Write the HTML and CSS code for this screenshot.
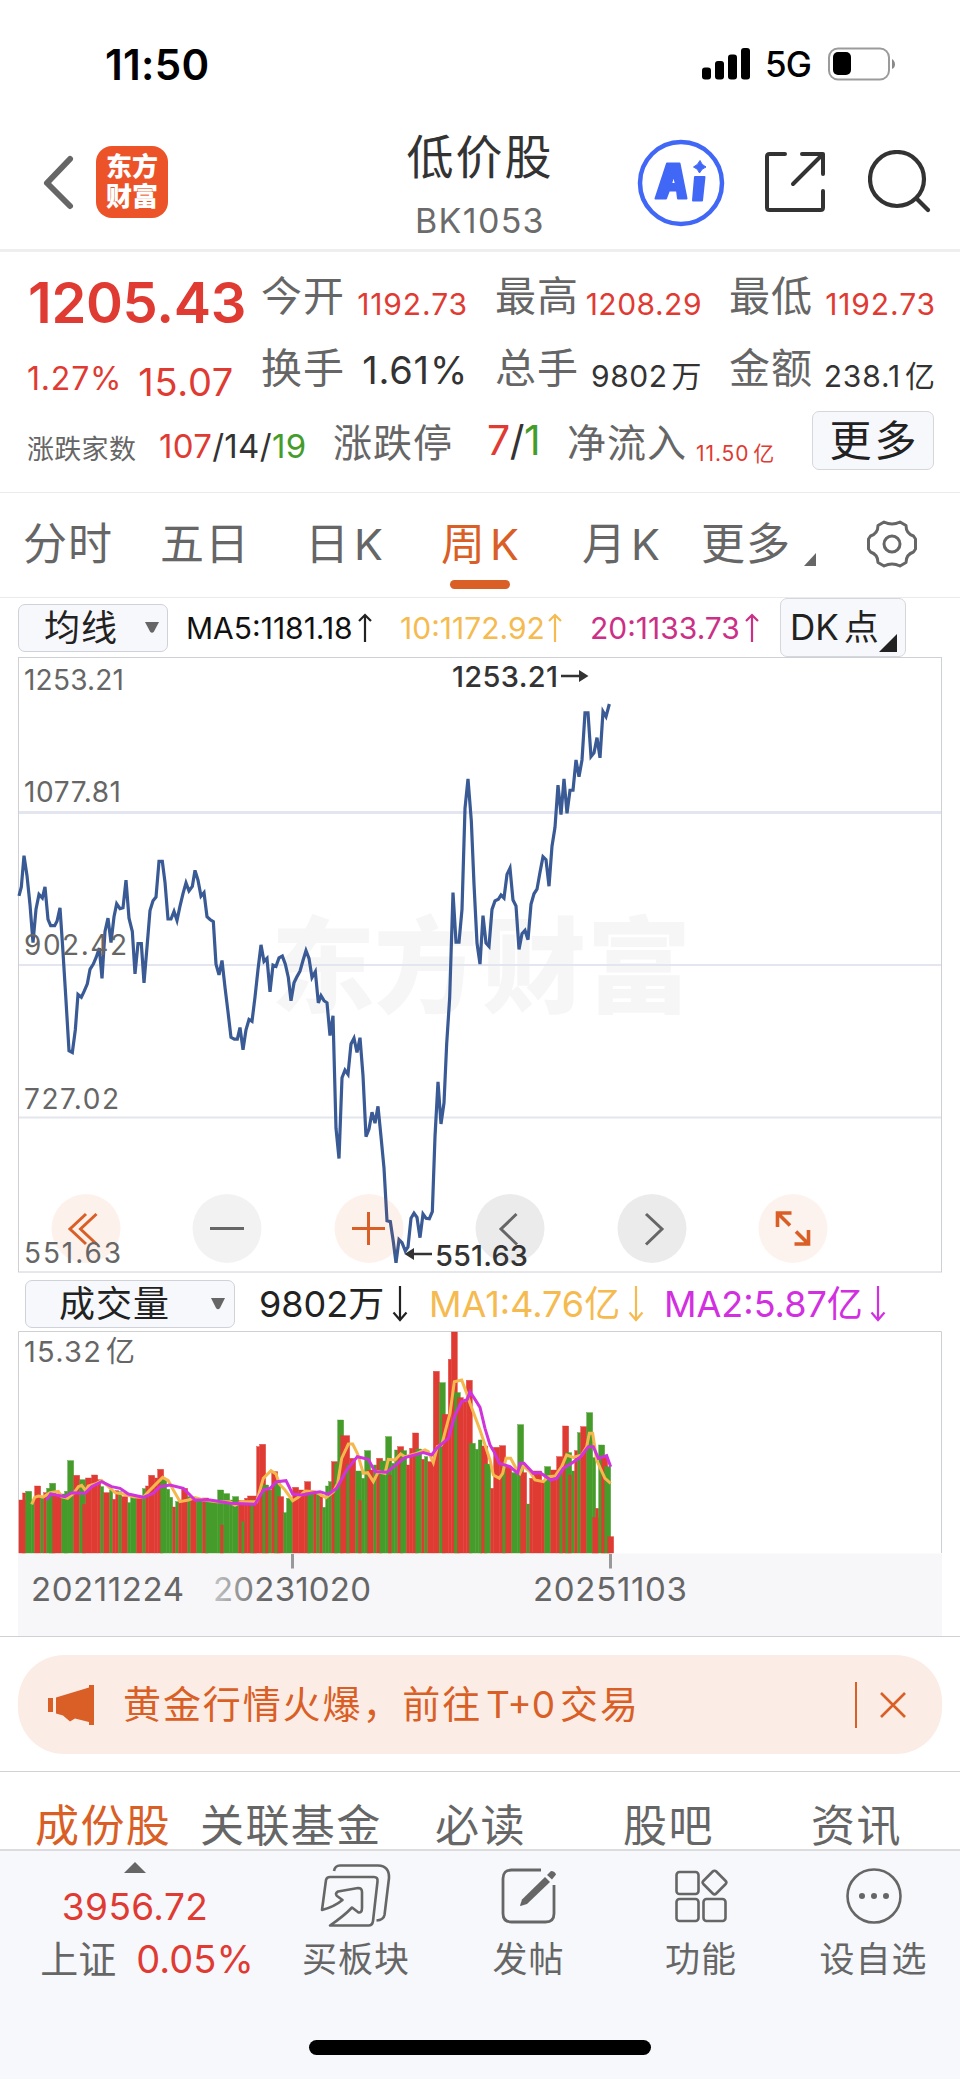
FILE: index.html
```html
<!DOCTYPE html>
<html lang="zh-CN">
<head>
<meta charset="utf-8">
<title>低价股 BK1053</title>
<link rel="stylesheet" href="styles.css">
</head>
<body>
<div class="statusbar">
  <span class="clock">11:50</span>
  <svg class="signal" width="48" height="32" viewBox="0 0 48 32"><rect x="0" y="19.500" width="9" height="12" rx="3"/><rect x="13" y="13" width="9" height="18.500" rx="3"/><rect x="26" y="6.500" width="9" height="25" rx="3"/><rect x="39" y="0" width="9" height="31.500" rx="3"/></svg>
  <span class="network">5G</span>
  <svg width="68" height="34" viewBox="0 0 68 34"><rect x="1" y="1.500" width="60" height="31" rx="9" fill="none" stroke="#9b9b9b" stroke-width="2"/><rect x="5" y="5" width="18" height="23" rx="5"/><path d="M64 12c4 2.500 4 8.500 0 10z" fill="#8a8a8a"/></svg>
</div>

<header class="header">
  <svg class="back" width="36" height="60" viewBox="0 0 36 60"><path d="M29 7 6 31l23 23" fill="none" stroke="#666" stroke-width="6" stroke-linecap="round" stroke-linejoin="round"/></svg>
  <div class="logo"><span>东方</span><span>财富</span></div>
  <div class="title"><h1>低价股</h1><p>BK1053</p></div>
  <svg class="ai" width="88" height="88" viewBox="0 0 88 88"><circle cx="44" cy="44" r="41" fill="none" stroke="#4167f6" stroke-width="4.500"/><g fill="#4167f6" stroke="#4167f6" stroke-width="2" stroke-linejoin="round"><path fill-rule="evenodd" d="M30 24.500h12.500l7 35H41l-1-8h-8l-3 8H18.500zM36.500 36l-2.500 9h5z"/><path d="M58 38h9.500L65 61.500H56z"/><path d="M63 21.500q1.500 4.500 6 6.500-4.500 1.500-6.500 6-1.500-4.500-6-6 4.500-2 6.500-6.500z" stroke-width="1"/></g></svg>
  <svg class="share" width="64" height="64" viewBox="0 0 64 64" fill="none" stroke="#333" stroke-width="4" stroke-linecap="round" stroke-linejoin="round"><path d="M22 4H6.500Q4 4 4 6.500v51Q4 60 6.500 60h51q2.500 0 2.500-2.500V41M39 4h21v20M59 5 30 34"/></svg>
  <svg class="search" width="64" height="64" viewBox="0 0 64 64" fill="none" stroke="#333" stroke-width="4.200" stroke-linecap="round"><circle cx="29" cy="29" r="27"/><path d="m49 49 11 11"/></svg>
</header>

<section class="quote">
  <div class="qrow qrow-a">
    <strong class="price">1205.43</strong>
    <span class="lab">今开</span><span class="val wide up">1192.73</span>
    <span class="lab">最高</span><span class="val up">1208.29</span>
    <span class="lab">最低</span><span class="val wide up">1192.73</span>
  </div>
  <div class="qrow qrow-b">
    <span class="change up"><span class="pct">1.27%</span><span class="diff">15.07</span></span>
    <span class="lab">换手</span><span class="val big">1.61%</span>
    <span class="lab">总手</span><span class="val">9802<i>万</i></span>
    <span class="lab">金额</span><span class="val wide">238.1<i>亿</i></span>
  </div>
  <div class="qrow-c">
    <span class="c-small">涨跌家数</span>
    <span class="c-count"><b class="up">107</b>/14/<b class="down">19</b></span>
    <span class="c-lab">涨跌停</span>
    <span class="c-limit"><b class="up">7</b>/<b class="down">1</b></span>
    <span class="c-lab">净流入</span>
    <span class="c-flow up">11.50<i>亿</i></span>
    <button class="more">更多</button>
  </div>
</section>

<nav class="periods">
  <span>分时</span><span>五日</span><span>日<i>K</i></span><span class="active">周<i>K</i></span><span>月<i>K</i></span><span class="tri">更多</span>
  <svg width="52" height="52" viewBox="0 0 52 52" fill="none" stroke="#666" stroke-width="3" stroke-linejoin="round"><circle cx="26" cy="26" r="8"/><path d="M18 4q8 4 16 0l6 3.500q0 8 7.500 10.500l2 3v10l-2 3q-7.500 2.500-7.500 10.500L34 48q-8-4-16 0l-6-3.500q0-8-7.500-10.500l-2-3V21l2-3Q12 15.500 12 7.500z"/></svg>
</nav>

<section class="indicators">
  <span class="select sel-ma">均线<svg width="14" height="12" viewBox="0 0 14 12"><path d="M0 0h14L9 9.500q-2 2.500-4 0z" fill="#666"/></svg></span>
  <span class="ma ma5">MA5:1181.18</span><svg class="arr" width="14" height="30" viewBox="0 0 14 30" stroke="#222"><path d="M7 29V2M1 8l6-6 6 6"/></svg>
  <span class="ma ma10">10:1172.92</span><svg class="arr" width="14" height="30" viewBox="0 0 14 30" stroke="#f5ba50"><path d="M7 29V2M1 8l6-6 6 6"/></svg>
  <span class="ma ma20">20:1133.73</span><svg class="arr" width="14" height="30" viewBox="0 0 14 30" stroke="#cc2f86"><path d="M7 29V2M1 8l6-6 6 6"/></svg>
  <span class="dk">DK<i>点</i></span>
</section>

<svg class="chart" width="960" height="616" viewBox="0 657 960 616">
  <g class="watermark"><text x="271" y="1005">东</text><text x="374" y="1005">方</text><text x="482" y="1005">财</text><text x="587" y="1005">富</text></g>
  <g stroke="#e3e6ee"><path d="M19 812.500h922" stroke-width="3"/><path d="M19 965h922M19 1117.500h922" stroke-width="2"/></g>
  <rect x="18.500" y="657.500" width="923" height="614.500" fill="none" stroke="#cfd0d4"/>
  <g id="price"></g>
  <g class="controls">
    <circle cx="86" cy="1228.500" r="34.500" fill="#e8652a" fill-opacity=".09"/>
    <circle cx="227" cy="1228.500" r="34.500" fill="#000" fill-opacity=".05"/>
    <circle cx="369" cy="1228.500" r="34.500" fill="#e8652a" fill-opacity=".09"/>
    <circle cx="510" cy="1228.500" r="34.500" fill="#000" fill-opacity=".08"/>
    <circle cx="652" cy="1228.500" r="34.500" fill="#000" fill-opacity=".08"/>
    <circle cx="793" cy="1228.500" r="34.500" fill="#e8652a" fill-opacity=".08"/>
    <g fill="none" stroke="#d95f26" stroke-width="3"><path d="m86 1214-16 15 16 15M96.500 1214l-16 15 16 15M352 1228.500h33M368.500 1212v33"/><path d="M777.500 1227v-14h14M777.500 1213l12.500 12.500M808.500 1230v14h-14M808.500 1244l-12.500-12.500" stroke-width="3.600"/></g>
    <g fill="none" stroke="#666" stroke-width="3"><path d="M210 1228.500h34M516.500 1214 501 1229l16 15.500M646 1214l16 15-16 15.500"/></g>
  </g>
  <g class="axis"><text x="24" y="689.500" textLength="100">1253.21</text><text x="24" y="801.500" textLength="97">1077.81</text><text x="24" y="954.500" textLength="103">902.42</text><text x="24" y="1108.500" textLength="95">727.02</text><text x="24" y="1262.500" textLength="97">551.63</text></g>
  <g class="mark"><text x="452" y="687" textLength="106">1253.21</text><text x="435" y="1265.500" textLength="93">551.63</text><path d="M561 676h20M432 1254h-20" stroke="#333" stroke-width="2.500"/><path d="M579 670l9.500 6-9.500 6zM414 1248l-9.500 6 9.500 6z"/></g>
</svg>

<section class="volbar">
  <span class="select sel-vol">成交量<svg width="14" height="12" viewBox="0 0 14 12"><path d="M0 0h14L9 10q-2 2.500-4 0z" fill="#666"/></svg></span>
  <span class="vol v0">9802万</span><svg class="arr" width="16" height="36" viewBox="0 0 16 36" stroke="#222"><path d="M8 0v34M1.500 26.500 8 34l6.500-7.500"/></svg>
  <span class="vol v1">MA1:4.76亿</span><svg class="arr" width="16" height="36" viewBox="0 0 16 36" stroke="#f5ba50"><path d="M8 0v34M1.500 26.500 8 34l6.500-7.500"/></svg>
  <span class="vol v2">MA2:5.87亿</span><svg class="arr" width="16" height="36" viewBox="0 0 16 36" stroke="#d12fe0"><path d="M8 0v34M1.500 26.500 8 34l6.500-7.500"/></svg>
</section>

<svg class="chart" width="960" height="306" viewBox="0 1331 960 306">
  <defs><linearGradient id="fade" gradientUnits="userSpaceOnUse" x1="205" x2="265" y1="0" y2="0"><stop offset="0" stop-color="#d4d4d6"/><stop offset="1" stop-color="#666"/></linearGradient></defs>
  <rect x="18" y="1553.500" width="924" height="83" fill="#f7f7fa"/>
  <path d="M18.500 1553V1331.500h923V1553" fill="none" stroke="#cfd0d4"/>
  <g id="volume"></g>
  <path d="M292.500 1554v14.500M610.500 1554v14.500" stroke="#999" stroke-width="3"/>
  <text class="voltop" x="24" y="1361.500" textLength="77">15.32</text><text class="voltop" x="106" y="1361.500">亿</text>
  <g class="dates"><text x="31" y="1601" textLength="153">20211224</text><text x="213" y="1601" textLength="158" fill="url(#fade)">20231020</text><text x="533" y="1601" textLength="154">20251103</text></g>
  <path d="M0 1636.500h960" stroke="#d0d1d6"/>
</svg>

<section class="promo">
  <div class="pill">
    <svg width="46" height="40" viewBox="0 0 46 40" fill="#d95f26"><path d="M0 13h5v14H0zM8 12.500 41 2.500V0h5v40h-5v-3l-14-3.500-5 3-7-6-7-2z"/></svg>
    <span class="msg">黄金行情火爆，前往<i>T+0</i>交易</span>
    <span class="close"><svg width="26" height="26" viewBox="0 0 26 26" stroke="#d95f26" stroke-width="2.600"><path d="M1 1l24 24M25 1 1 25"/></svg></span>
  </div>
</section>

<nav class="subtabs"><span class="active">成份股</span><span>关联基金</span><span>必读</span><span>股吧</span><span>资讯</span></nav>

<footer class="dock">
  <div class="index"><svg width="22" height="11" viewBox="0 0 22 11"><path d="M0 11 11 0l11 11z" fill="#666"/></svg><b>3956.72</b><p>上证<span>0.05%</span></p></div>
  <div class="act"><svg width="72" height="66" viewBox="0 0 72 66" fill="none" stroke="#666" stroke-width="2.600" stroke-linejoin="round"><path d="M14 8q1-5.500 6-5.500h38Q69.500 3 69 15l-4.500 37q-1 5-8 5.500"/><path d="M2 47 6 17q.7-3 4-3h44q4 0 3.500 4.500L53 58q-.6 4.500-4.500 4.500H10Q24 53 32 44.500l6.500 5Q42 50 42 45V29q0-4-4-4l-20 3.500q-3.500 2-1 4.500l5.500 4Q14 44 2 47z"/></svg><span>买板块</span></div>
  <div class="act"><svg width="56" height="56" viewBox="0 0 56 56" fill="none" stroke="#666" stroke-width="2.800"><path d="M40 2H10.500Q2 2 2 10.500v35Q2 54 10.500 54h34q8.500 0 8.500-8.500V17"/><path d="m19 37.500 2-6L44 9l5 5-23 22-6.500 2z" fill="#666" stroke="none"/><path d="m46 7 4-4q4 0 5 3.500l-4 5z" fill="#666" stroke="none"/></svg><span>发帖</span></div>
  <div class="act"><svg width="54" height="54" viewBox="0 0 54 54" fill="none" stroke="#666" stroke-width="2.600"><rect x="2.500" y="3" width="22" height="22" rx="3"/><rect x="2.500" y="30" width="22" height="22" rx="3"/><rect x="29.500" y="30" width="22" height="22" rx="3"/><rect x="31.500" y="4.500" width="18" height="18" rx="2.500" transform="rotate(45 40.500 13.500)"/></svg><span>功能</span></div>
  <div class="act"><svg width="56" height="56" viewBox="0 0 56 56"><circle cx="28" cy="28" r="26.500" fill="none" stroke="#666" stroke-width="2.600"/><g fill="#666"><circle cx="16" cy="28" r="3"/><circle cx="28" cy="28" r="3"/><circle cx="40" cy="28" r="3"/></g></svg><span>设自选</span></div>
  <div class="home"></div>
</footer>
<script src="chart.js"></script>
</body>
</html>
```
FILE: styles.css
```css
* { box-sizing: border-box; }
body { margin: 0; width: 960px; height: 2079px; overflow: hidden; background: #fff; color: #333; font-family: Inter, "Noto Sans CJK SC", sans-serif; font-weight: 400; }
i, b { font-style: normal; font-weight: inherit; }
h1, p { margin: 0; font-weight: 400; }
svg { display: block; flex: none; }
span { white-space: nowrap; }
.up { color: #df3b33; }
.down { color: #449c2b; }

.statusbar { height: 128px; padding-left: 105px; display: flex; align-items: center; color: #000; }
.clock { width: 597px; font-size: 42px; font-weight: 600; line-height: 129px; letter-spacing: .3px; }
.signal { margin-right: 15px; }
.network { width: 63px; font-size: 35px; font-weight: 500; line-height: 131px; letter-spacing: -1px; }

.header { height: 124px; padding: 0 0 14px 41px; border-bottom: 3px solid #eee; display: flex; align-items: center; }
.logo { width: 72px; height: 72px; margin-left: 19px; padding-top: 6px; border-radius: 16px; background: #ec5328; color: #fff; font-weight: 900; font-size: 26px; line-height: 30px; text-align: center; }
.logo span { display: block; }
.title { width: 310px; height: 110px; margin-left: 157px; text-align: center; }
.title h1 { font-size: 47px; line-height: 60px; letter-spacing: 2px; color: #333; }
.title p { font-size: 34px; line-height: 67px; letter-spacing: 1.300px; color: #6b6b6b; }
.ai { margin: 2px 0 0 2px; }
.share { margin-left: 38px; }
.search { margin-left: 41px; }

.quote { height: 241px; border-bottom: 1px solid #ebebeb; }
.qrow { display: grid; padding-left: 27px; grid-template-columns: 234px 82px 125px 27px 82px 125px 27px 82px 125px; align-items: start; }
.qrow > :nth-child(4) { grid-column: 5; }
.qrow > :nth-child(5) { grid-column: 6; }
.qrow > :nth-child(6) { grid-column: 8; }
.qrow > :nth-child(7) { grid-column: 9; }
.qrow-a, .qrow-b { height: 80px; }
.price { font-size: 56px; line-height: 103px; font-weight: 600; letter-spacing: -.3px; padding-left: 1px; color: #df3b33; }
.lab { font-size: 41px; line-height: 89px; letter-spacing: 1px; color: #666; }
.val { font-size: 30px; line-height: 104px; text-align: right; letter-spacing: .5px; }
.val.wide { letter-spacing: .9px; }
.qrow-b .lab { line-height: 72px; }
.qrow-b .val { line-height: 88px; }
.qrow-b .val.big { font-size: 38px; line-height: 77px; letter-spacing: .8px; }
.val i, .c-flow i { margin-left: 4px; }
.change { display: flex; gap: 16px; }
.pct { font-size: 32px; line-height: 93px; letter-spacing: .8px; }
.diff { font-size: 38px; line-height: 100px; letter-spacing: .7px; }
.qrow-c { height: 80px; display: grid; padding-left: 27px; grid-template-columns: 132px 174px 154px 80px 129px 116px 122px; align-items: start; }
.c-small { font-size: 27px; line-height: 76px; letter-spacing: .3px; color: #666; }
.c-count { font-size: 33px; line-height: 69px; letter-spacing: .3px; }
.c-lab { font-size: 39px; line-height: 61px; letter-spacing: 1px; color: #666; }
.c-limit { font-size: 41px; line-height: 57px; letter-spacing: -.5px; }
.c-flow { font-size: 21px; line-height: 83px; letter-spacing: .9px; }
.more { margin: -1px 0 0; padding: 0 0 0 3px; width: 122px; height: 59px; border: 1.500px solid #d5d7dc; border-radius: 7px; background: #f7f8fb; font: 400 42px/54px Inter, "Noto Sans CJK SC", sans-serif; letter-spacing: 3px; color: #222; }

.periods { height: 105px; padding-left: 23px; display: grid; grid-template-columns: 137px 145px 136px 141px 119px 165px 52px; border-bottom: 1px solid #ebebeb; font-size: 44px; line-height: 103px; color: #666; letter-spacing: 1px; }
.periods i { margin-left: 4px; font-size: 43px; }
.periods svg { margin-top: 25px; }
.periods .active { position: relative; color: #d95f26; }
.periods .active::after { content: ""; position: absolute; left: 9px; top: 87px; width: 60px; height: 9px; border-radius: 5px; background: #d95f26; }
.tri { position: relative; }
.tri::after { content: ""; position: absolute; left: 103px; top: 60px; border-left: 12px solid transparent; border-bottom: 13px solid #666; }

.indicators { height: 59px; padding-left: 18px; display: flex; align-items: center; }
.select { display: flex; align-items: center; justify-content: space-between; height: 48px; border: 1.500px solid #d0d2d9; border-radius: 7px; background: #f7f8fb; color: #222; letter-spacing: 1px; font-size: 36px; line-height: 44px; }
.sel-ma { width: 150px; padding: 0 8px 0 25px; margin-right: 18px; }
.ma { font-size: 30px; line-height: 60px; }
.arr { fill: none; stroke-width: 2.200; }
.ma5 { width: 172px; color: #111; }
.ma10 { width: 148px; margin-left: 28px; color: #f5ba50; }
.ma20 { width: 155px; margin-left: 28px; color: #cc2f86; }
.dk { position: relative; width: 126px; height: 59px; margin-left: 21px; padding-left: 9px; border: 1.500px solid #d5d7dc; border-radius: 7px; background: #f7f8fb; font-size: 35px; line-height: 57px; color: #222; }
.dk i { margin-left: 5px; }
.dk::after { content: ""; position: absolute; right: 8px; bottom: 4px; border-left: 18px solid transparent; border-bottom: 18px solid #222; }

.chart text { font-family: Inter, "Noto Sans CJK SC", sans-serif; }
.watermark text { font-size: 104px; font-weight: 900; fill: #f6f6f6; }
.axis text { font-size: 28px; fill: #666; }
.mark text { font-size: 29px; font-weight: 500; fill: #333; }
.mark path { fill: #333; }
.voltop { font-size: 29px; fill: #666; }
.dates text { font-size: 33px; }
.dates { fill: #666; }

.volbar { height: 58px; padding: 3px 0 0 25px; display: flex; align-items: center; }
.sel-vol { width: 210px; padding: 0 9px 0 33px; margin-right: 24px; }
.vol { font-size: 36px; line-height: 50px; }
.v0 { width: 133px; color: #222; }
.v1 { width: 199px; margin-left: 21px; color: #f5ba50; }
.v2 { width: 206px; margin-left: 20px; color: #d12fe0; }

.promo { height: 135px; padding: 18px 18px 0; border-bottom: 1px solid #d3d3d6; }
.pill { height: 99px; padding: 0 36px 0 30px; border-radius: 46px; display: flex; align-items: center; background: #fbede5; color: #d95f26; }
.msg { margin-left: 29px; font-size: 38px; line-height: 99px; letter-spacing: 1.900px; }
.msg i { margin: 0 5px 0 4px; font-size: 37px; letter-spacing: 0; }
.close { margin-left: auto; padding: 10px 0 10px 23px; border-left: 2px solid #d95f26; }

.subtabs { height: 77px; padding: 32px 60px 0 35px; display: grid; grid-template-columns: 165px 235px 188px 188px 90px; font-size: 44px; line-height: 44px; letter-spacing: 1.400px; color: #666; }
.subtabs .active { color: #d95f26; }

.dock { position: relative; height: 231px; border-top: 2px solid #dcdcde; background: #f7f8fb; display: grid; grid-template-columns: 270px 172px 173px 172px 173px; align-items: start; color: #666; }
.index { padding-top: 11px; display: flex; flex-direction: column; align-items: center; color: #df3b33; }
.index b { font-size: 37px; line-height: 52px; margin-top: 8px; letter-spacing: .4px; }
.index p { font-size: 38px; line-height: 52px; padding-left: 24px; color: #666; }
.index p span { margin-left: 20px; color: #df3b33; }
.act { height: 140px; display: flex; flex-direction: column; align-items: center; }
.act svg { height: 66px; margin-top: 12px; }
.act span { font-size: 35px; line-height: 61px; letter-spacing: 1px; }
.home { position: absolute; left: 309px; top: 189px; width: 342px; height: 15px; border-radius: 8px; background: #000; }
```
FILE: chart.js
```js
const NS = 'http://www.w3.org/2000/svg';
function add(parent, tag, attrs) {
  const el = document.createElementNS(NS, tag);
  for (const k in attrs) el.setAttribute(k, attrs[k]);
  parent.appendChild(el);
  return el;
}
/* Converts "x,y x,y" pairs with an origin and scale into page coordinates. */
function pts(str, ox, oy, sy) {
  return str.trim().split(/\s+/).map(p => {
    const [x, y] = p.split(',').map(Number);
    return (ox + x / 3).toFixed(2) + ',' + (oy + y / sy).toFixed(2);
  }).join(' ');
}
function line(parent, points, color, width) {
  add(parent, 'polyline', { points, fill: 'none', stroke: color, 'stroke-width': width });
}

const priceA = '57,685 64,665 72,595 81,640 90,705 99,790 108,715 117,682 127,690 135,665 144,738 152,752 164,752 171,742 180,712 188,800 198,920 207,1032 217,1036 226,985 234,906 244,912 253,898 262,882 270,850 280,838 289,822 298,802 306,870 315,765 324,735 333,790 342,732 350,703 360,714 369,712 378,650 387,735 397,765 405,860 414,792 424,792 432,880 441,800 450,718 459,696 468,688 477,608 487,608 495,655 504,737 513,737 522,720 531,740 540,708 549,680 558,656 567,674 577,664 585,628 594,650 603,686 612,678 621,732 630,738 640,743 648,838 657,862 666,830 675,890 684,945 693,1002 703,1006 712,1006 720,980 729,1030 738,985 747,962 756,966 765,912 774,850 783,795 792,832 801,825 810,900 819,840 828,843 837,824 847,820 856,838 865,868 873,920 882,880 891,866 900,854 909,830 918,808 927,825 936,868 946,855 955,925';
const priceB = '3,845 12,857 21,862 30,940 39,893 48,1160 57,1232 66,1040 75,1022 84,1032 93,960 102,946 111,980 120,945 129,1035 138,1180 147,1162 156,1122 165,1148 174,1108 183,1180 192,1255 201,1380 211,1382 220,1430 228,1480 237,1425 246,1432 256,1452 264,1442 273,1374 282,1362 291,1372 300,1420 309,1364 318,1374 328,1375 337,1358 345,1180 354,1050 363,1150 372,1100 380,960 389,850 399,600 408,718 417,718 426,640 435,400 444,330 454,430 462,580 471,720 480,770 489,655 498,720 507,728 516,640 525,620 535,616 543,606 552,613 561,557 570,542 579,618 588,632 597,735 606,698 615,690 624,712 633,628 642,603 651,592 660,552 669,515 678,522 687,585 696,490 705,445 714,345 723,415 732,330 741,412 750,357 759,357 768,285 777,325 786,285 795,173 804,173 813,277 822,268 831,232 840,280 849,170 858,182 868,152';
line(document.getElementById('price'), pts(priceA, 0, 590, 2.24) + ' ' + pts(priceB, 320, 640, 2.376), '#395a94', 3.2);

/* left, right, top, direction */
const barsA = '57 77 690r,68 77 669r,77 95 664g,95 104 690g,104 122 648r,122 131 685g,131 140 668r,140 158 655g,149 167 640g,158 185 672r,185 203 672g,194 203 664g,203 221 572g,221 239 616r,239 257 629g,248 257 703r,257 275 624r,275 293 615r,293 302 629r,302 311 650g,311 329 668r,329 338 660g,338 347 688r,347 356 662r,356 365 665g,365 383 680r,383 392 698g,392 410 680g,410 428 682r,428 437 656g,437 446 648r,446 464 616r,464 473 624r,473 491 598r,482 500 630g,500 509 658g,509 518 682g,518 527 711r,527 536 695g,536 545 690r,545 563 655r,563 572 680g,572 590 688r,590 608 685g,608 626 684r,617 653 690g,653 671 660g,662 671 765r,671 689 671g,689 698 690g,698 716 680g,716 734 692r,725 734 755g,734 743 685r,743 770 678r,752 761 690g,761 770 680r,770 779 530r,779 797 523r,788 806 645g,797 806 655r,806 815 660g,815 833 605r,824 842 640g,833 851 680r,851 860 728g,860 878 685g,878 896 652r,896 914 660r,914 932 635r,923 941 662g,941 950 668r,950 959 672g,959 968 680r,968 977 712g,977 986 648g,986 995 635g,995 1013 575r,1004 1013 580g,1013 1031 450g,1022 1049 497r,1040 1049 585g,1049 1067 565r,1067 1085 603g,1076 1085 692r,1085 1094 625g,1094 1112 542g,1103 1121 600r,1121 1130 585g,1130 1148 565r,1139 1157 573g,1157 1175 500g,1166 1175 615r,1175 1184 580g,1184 1193 540g,1193 1211 530r,1202 1220 542g,1220 1229 585r,1229 1238 535r,1238 1256 489r,1247 1265 537g,1265 1274 568r,1274 1283 560g,1283 1301 575r,1300 1318 304r,1318 1336 338g,1327 1345 433r,1345 1354 268r,1354 1372 186r,1363 1381 368g,1372 1390 383r,1390 1399 395r,1399 1417 331r,1408 1426 520g,1426 1435 538g,1435 1445 510g';
const barsB = '0 6 810g,5 23 828r,14 32 882g,32 41 955r,41 59 832r,59 77 827r,68 77 885g,77 95 890r,95 113 908g,113 131 764g,122 140 908r,140 149 1002g,149 158 925r,158 185 903r,185 194 935r,194 212 890g,212 230 900r,230 248 860r,239 248 915g,248 266 768r,257 275 848g,266 275 915r,275 284 903g,284 293 842r,293 302 788g,302 320 770r,320 338 728g,338 347 863g,338 356 1043r,347 356 1015r,356 374 825g,365 383 860r,374 392 890g,383 401 1100r';
const vol = document.getElementById('volume');
function bars(list, ox, oy) {
  list.split(',').forEach(s => {
    const m = s.match(/(\d+) (\d+) (\d+)(\w)/);
    const y = oy + m[3] / 3;
    const color = m[4] === 'r' ? '#df3b33' : '#469c2b';
    add(vol, 'rect', { x: ox + m[1] / 3, y, width: (m[2] - m[1]) / 3, height: 1553 - y, fill: color, stroke: color, 'stroke-width': .4 });
  });
}
bars(barsA, 0, 1270);
bars(barsB, 480, 1170);
const ma1a = '95,703 104,682 115,678 130,681 150,668 175,664 185,680 203,685 221,670 235,650 245,646 257,662 265,648 290,640 305,632 320,645 345,668 370,672 400,680 430,682 445,665 470,640 488,622 505,632 520,660 540,695 565,690 585,683 610,690 650,695 690,695 705,706 725,695 770,695 790,625 813,602 828,612 838,642 855,660 878,692 895,682 915,663 945,665 978,683 1000,665 1013,640 1025,565 1045,522 1058,522 1072,550 1090,610 1103,608 1120,635 1135,605 1155,610 1165,568 1185,570 1202,552 1215,560 1250,550 1275,540 1285,545 1300,578 1312,530 1325,525 1350,430 1363,335 1385,330 1400,370 1410,400';
const ma1b = '0,780 15,825 30,870 40,915 58,925 68,910 78,865 92,865 108,895 120,910 130,888 150,905 165,930 190,935 205,920 225,918 245,890 260,855 280,862 305,855 320,830 328,790 338,790 350,870 362,897 375,925 392,940';
const ma2a = '140,690 152,672 195,680 215,668 255,670 275,650 305,635 335,650 360,655 385,672 430,682 460,670 480,650 510,645 550,655 585,690 630,690 690,700 765,703 790,660 810,655 830,635 858,632 878,672 905,675 940,668 960,665 985,673 1010,655 1040,600 1072,560 1105,568 1125,605 1160,607 1215,563 1270,548 1295,555 1310,535 1345,505 1365,435 1385,395 1402,388 1410,365 1425,388';
const ma2b = '0,712 15,775 30,825 42,845 58,880 90,890 113,910 120,880 132,880 160,910 180,908 195,918 212,930 230,925 250,895 275,880 300,862 325,830 340,830 355,865 380,857 392,890';
line(vol, pts(ma1a, 0, 1270, 3) + ' ' + pts(ma1b, 480, 1170, 3), '#f5b84c', 3);
line(vol, pts(ma2a, 0, 1270, 3) + ' ' + pts(ma2b, 480, 1170, 3), '#cf33dc', 3);
```
